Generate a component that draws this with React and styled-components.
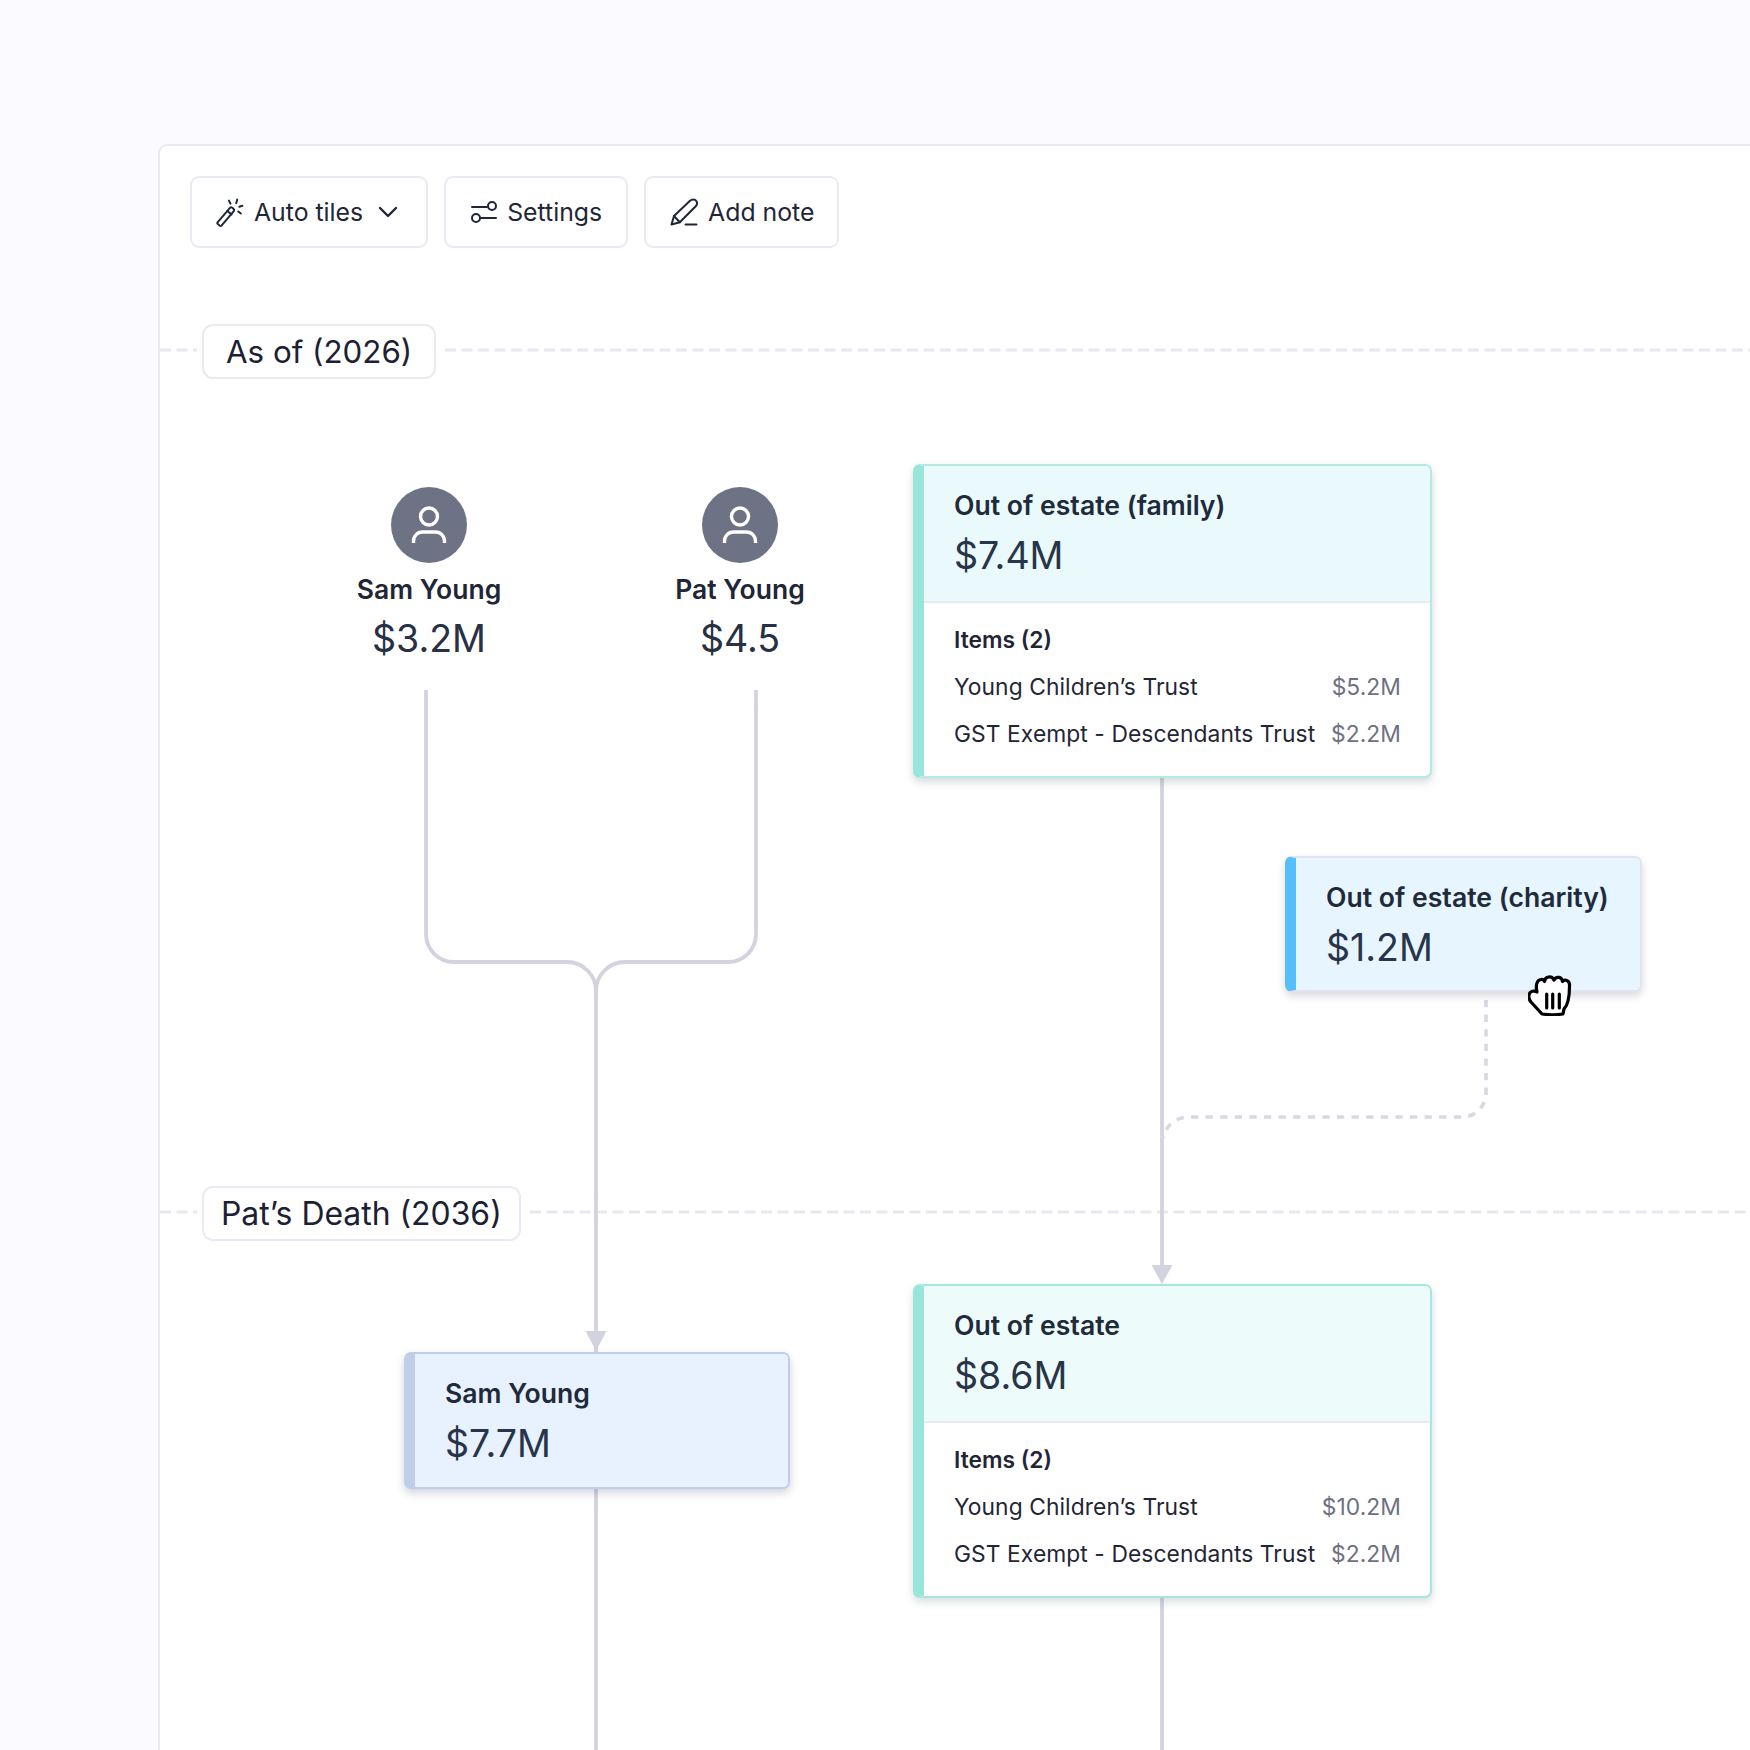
import React from 'react';
import styled, { createGlobalStyle } from 'styled-components';

const Global = createGlobalStyle`
  html, body { margin: 0; padding: 0; background: #FAFAFF; }
  body { font-family: Inter, "Liberation Sans", sans-serif; color: #1F2636; }
  * { box-sizing: border-box; }
`;

const Page = styled.div`
  width: 1750px;
  height: 1750px;
  overflow: hidden;
  padding: 144px 0 0 158px;
  background: #FAFAFF;
`;

const Panel = styled.main`
  width: 1700px;
  height: 1700px;
  background: #FFFFFF;
  border: 2px solid #E9EAF2;
  border-radius: 9px 0 0 0;
`;

const Toolbar = styled.div`
  display: flex;
  gap: 16px;
  padding: 30px 0 0 30px;
`;

const ToolButton = styled.button`
  display: flex;
  align-items: center;
  gap: ${p => p.$gap || 10}px;
  height: 72px;
  padding: 0 ${p => p.$right || 24}px 0 ${p => p.$left || 25}px;
  background: #FFFFFF;
  border: 2.5px solid #E9EAF2;
  border-radius: 9px;
  font: 400 24.8px Inter, sans-serif;
  color: #1F2636;
`;

const Chevron = styled.svg`
  margin-left: 6px;
`;

const Canvas = styled.div`
  position: relative;
  width: 1590px;
  height: 1502px;
`;

const Wires = styled.svg`
  position: absolute;
  inset: 0;
`;

const Era = styled.div`
  position: absolute;
  left: 42px;
  top: ${p => p.$y}px;
  display: flex;
  align-items: center;
  height: 55px;
  padding: 0 ${p => p.$pad}px;
  background: #FFFFFF;
  border: 2.5px solid #E9EAF2;
  border-radius: 11px;
  font-size: ${p => p.$size}px;
  color: #1B2133;
`;

const Person = styled.div`
  position: absolute;
  left: ${p => p.$x}px;
  top: 239px;
  width: 240px;
  display: flex;
  flex-direction: column;
  align-items: center;
`;

const Avatar = styled.div`
  width: 76px;
  height: 76px;
  border-radius: 50%;
  background: #6D7385;
`;

const PersonName = styled.div`
  margin-top: 9.5px;
  font-size: 26.5px;
  line-height: 32px;
  font-weight: 600;
  color: #1F2636;
`;

const PersonValue = styled.div`
  margin-top: 11.5px;
  font-size: 37.5px;
  line-height: 46px;
  font-weight: 400;
  color: #283044;
`;

const TONES = {
  teal: { edge: '#B4E9E4', bar: '#98E6DA', fill: '#EAF9FB', shadow: 'rgba(40,70,80,.2)' },
  mint: { edge: '#A5E8DF', bar: '#98E6DA', fill: '#EEFBFB', shadow: 'rgba(40,70,80,.18)' },
  sky: { edge: '#E3E5EE', bar: '#56BFFB', fill: '#E6F5FF', shadow: 'rgba(60,60,90,.2)' },
  blue: { edge: '#BFCFE8', bar: '#BFCFE8', fill: '#E8F2FF', shadow: 'rgba(50,60,100,.22)' },
};

const Card = styled.section`
  position: absolute;
  left: ${p => p.$x}px;
  top: ${p => p.$y}px;
  width: ${p => p.$w}px;
  background: #FFFFFF;
  border: 2px solid ${p => TONES[p.$tone].edge};
  border-left: 11px solid ${p => TONES[p.$tone].bar};
  border-radius: 7px;
  box-shadow: 0 4px 9px ${p => TONES[p.$tone].shadow};
  overflow: hidden;
`;

const CardHead = styled.header`
  height: ${p => p.$h}px;
  padding: 18.5px 0 0 30px;
  background: ${p => TONES[p.$tone].fill};
`;

const CardTitle = styled.div`
  font-size: 26.6px;
  line-height: 40px;
  font-weight: 600;
  color: #1F2A3A;
`;

const CardValue = styled.div`
  margin-top: 8.5px;
  font-size: 37.5px;
  line-height: 46px;
  color: #283447;
`;

const CardBody = styled.div`
  border-top: 2px solid #E9EAF2;
  height: 175px;
  padding: 21px 29px 0 30px;
  display: flex;
  flex-direction: column;
  gap: 15px;
`;

const ItemsHead = styled.div`
  font-size: 22.8px;
  line-height: 32px;
  font-weight: 600;
  color: #1F2636;
`;

const Row = styled.div`
  display: flex;
  justify-content: space-between;
  font-size: 22.8px;
  line-height: 32px;
  letter-spacing: .08px;
  color: #1F2636;
`;

const Amount = styled.span`
  color: #6D7183;
`;

const Cursor = styled.svg`
  position: absolute;
  left: 1368px;
  top: 727px;
`;

const WandIcon = () => (
  <svg width="29" height="29" viewBox="0 0 28 28" fill="none" stroke="#1F2636" strokeWidth="1.9" strokeLinecap="round" strokeLinejoin="round">
    <path d="M1.5 23.5 L13.5 9.5 Q14.5 8.5 15.8 9.5 L17 10.6 Q18 11.6 17 12.8 L5.5 26.5 Q4.5 27.4 3.4 26.5 L1.8 25.2 Q0.9 24.4 1.5 23.5 Z" />
    <path d="M11 12.5 L15 16" />
    <path d="M12.5 2.5 L14 5.5 M20.5 1.5 L19.5 5 M25.5 7.5 L22.5 8.5 M24 15 L21.5 13" />
  </svg>
);

const SlidersIcon = () => (
  <svg width="26" height="22" viewBox="0 0 26 22" fill="none" stroke="#1F2636" strokeWidth="2" strokeLinecap="round">
    <path d="M1 6 H16 M10 17 H25" />
    <circle cx="21" cy="5" r="4" />
    <circle cx="5" cy="17" r="4" />
  </svg>
);

const PencilIcon = () => (
  <svg width="28" height="28" viewBox="0 0 28 28" fill="none" stroke="#1F2636" strokeWidth="2" strokeLinecap="round" strokeLinejoin="round">
    <path d="M1.5 26.5 L4 18 L20 2.8 C22 1 25 1 26.3 3 C27.6 5 27 7 25.5 8.5 L9.8 24.2 Z" />
    <path d="M4 18 L9.8 24.2" />
    <path d="M15.5 26.5 H26.5" />
  </svg>
);

const PersonIcon = () => (
  <svg width="76" height="76" viewBox="0 0 76 76" fill="none" stroke="#FFFFFF" strokeWidth="3.4" strokeLinecap="butt">
    <circle cx="38" cy="29.5" r="8.5" />
    <path d="M22.5 56 V54 A9 9 0 0 1 31.5 45 H44.5 A9 9 0 0 1 53.5 54 V56" />
  </svg>
);

const PersonNode = ({ x, name, value }) => (
  <Person $x={x}>
    <Avatar><PersonIcon /></Avatar>
    <PersonName>{name}</PersonName>
    <PersonValue>{value}</PersonValue>
  </Person>
);

const EstateCard = ({ y, tone, title, value, items }) => (
  <Card $x={753} $y={y} $w={519} $tone={tone}>
    <CardHead $h={135} $tone={tone}>
      <CardTitle>{title}</CardTitle>
      <CardValue>{value}</CardValue>
    </CardHead>
    <CardBody>
      <ItemsHead>Items (2)</ItemsHead>
      {items.map(([n, a]) => (
        <Row key={n}><span>{n}</span><Amount>{a}</Amount></Row>
      ))}
    </CardBody>
  </Card>
);

export default function App() {
  return (
    <Page>
      <Global />
      <Panel>
        <Toolbar>
          <ToolButton $left={24} $right={28} $gap={9}>
            <WandIcon />
            <span>Auto tiles</span>
            <Chevron width="20" height="12" viewBox="0 0 20 12" fill="none" stroke="#1F2636" strokeWidth="2.4" strokeLinecap="round" strokeLinejoin="round">
              <path d="M2 2 L10 10 L18 2" />
            </Chevron>
          </ToolButton>
          <ToolButton $left={25} $right={24}>
            <SlidersIcon />
            <span>Settings</span>
          </ToolButton>
          <ToolButton $left={24} $right={23}>
            <PencilIcon />
            <span>Add note</span>
          </ToolButton>
        </Toolbar>
        <Canvas>
          <Wires width="1590" height="1502" viewBox="160 248 1590 1502" fill="none">
            <g stroke="#E8E8F0" strokeWidth="2.8" strokeDasharray="11 5.5">
              <path d="M160 350 H197 M445 350 H1750" />
              <path d="M160 1212 H197 M530 1212 H1750" />
            </g>
            <g stroke="#D3D3E0" strokeWidth="3.8">
              <path d="M426 690 V934 A28 28 0 0 0 454 962 H567 A29 29 0 0 1 596 991 V1353" />
              <path d="M756 690 V934 A28 28 0 0 1 728 962 H625 A29 29 0 0 0 596 991" />
              <path d="M596 1488 V1750" />
              <path d="M1162 778 V1268" />
              <path d="M1162 1597 V1750" />
            </g>
            <path d="M1486 1000 V1093 A24 24 0 0 1 1462 1117 H1188 A26 26 0 0 0 1163 1138" stroke="#D8D8E3" strokeWidth="3.6" strokeDasharray="7.3 7.3" />
            <g fill="#D3D3E0">
              <path d="M1151.5 1265 H1172.5 L1162 1284 Z" />
              <path d="M585.5 1331 H606.5 L596 1351 Z" />
            </g>
          </Wires>

          <Era $y={76} $pad={22} $size={31.3}>As of (2026)</Era>
          <Era $y={938} $pad={17} $size={31.9}>Pat’s Death (2036)</Era>

          <PersonNode x={149} name="Sam Young" value="$3.2M" />
          <PersonNode x={460} name="Pat Young" value="$4.5" />

          <EstateCard
            y={216}
            tone="teal"
            title="Out of estate (family)"
            value="$7.4M"
            items={[['Young Children’s Trust', '$5.2M'], ['GST Exempt - Descendants Trust', '$2.2M']]}
          />

          <Card $x={1125} $y={608} $w={357} $tone="sky">
            <CardHead $h={132} $tone="sky">
              <CardTitle>Out of estate (charity)</CardTitle>
              <CardValue>$1.2M</CardValue>
            </CardHead>
          </Card>

          <Card $x={244} $y={1104} $w={386} $tone="blue">
            <CardHead $h={133} $tone="blue">
              <CardTitle>Sam Young</CardTitle>
              <CardValue>$7.7M</CardValue>
            </CardHead>
          </Card>

          <EstateCard
            y={1036}
            tone="mint"
            title="Out of estate"
            value="$8.6M"
            items={[['Young Children’s Trust', '$10.2M'], ['GST Exempt - Descendants Trust', '$2.2M']]}
          />

          <Cursor width="44" height="41" viewBox="0 0 44 41" fill="#FFFFFF" stroke="#000000" strokeWidth="3.2" strokeLinejoin="round" strokeLinecap="round">
            <path d="M14 39 L3 27 C-1 22 1 16 6 16 L9 17 C7.5 11 8.5 5 13 4.5 C15 4 16 5 16.5 6.5 C17 1 24 0.5 26 5 C28 1 34 1.5 34.5 6.5 C37 3.5 42 5.5 41.5 11 C41.5 21 40 30 36 34 L35 39 C28 40 21 40 14 39 Z" />
            <path d="M18.7 19 V33 M24.7 19 V33 M31.3 19 V33" fill="none" />
          </Cursor>
        </Canvas>
      </Panel>
    </Page>
  );
}
